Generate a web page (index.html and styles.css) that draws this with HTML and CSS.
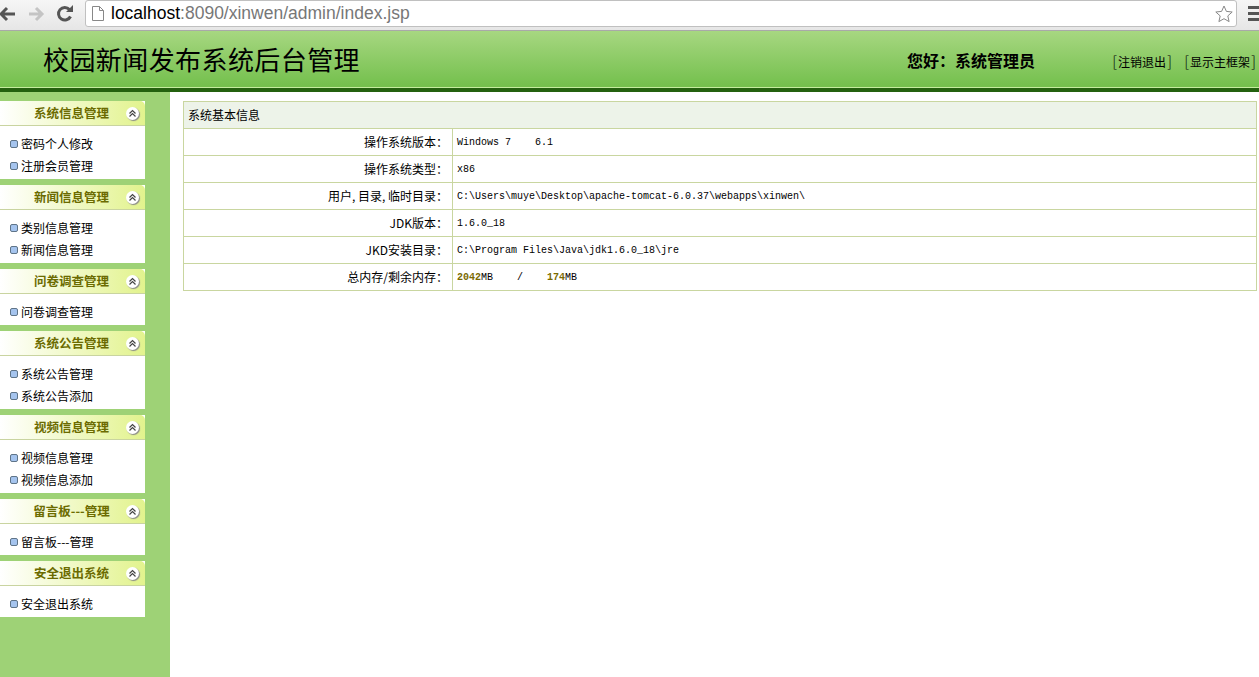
FILE: index.html
```html
<!DOCTYPE html>
<html lang="zh">
<head>
<meta charset="utf-8">
<title>校园新闻发布系统后台管理</title>
<link rel="stylesheet" href="styles.css">
</head>
<body>
<svg class="defs" width="0" height="0"><symbol id="up" viewBox="0 0 13 13"><path d="M3.500 6.500l3-3 3 3M3.500 9.500l3-3 3 3" fill="none" stroke="#444" stroke-width="1.200"/></symbol></svg>
<div class="chrome">
  <svg class="nav" width="20" height="20" viewBox="0 0 20 20"><path d="M18 10H6M10 4l-6 6 6 6" fill="none" stroke="#555" stroke-width="3"/></svg>
  <svg class="nav" width="20" height="20" viewBox="0 0 20 20"><path d="M3 10h12M10 4l6 6-6 6" fill="none" stroke="#c4c4c4" stroke-width="3"/></svg>
  <svg class="nav" width="20" height="20" viewBox="0 0 20 20"><path d="M15.500 12.500A6.300 6.300 0 1 1 14.500 5.500" fill="none" stroke="#555" stroke-width="3"/><path d="M11 8h7V1z" fill="#555"/></svg>
  <div class="omnibox">
    <svg class="page" width="12" height="15" viewBox="0 0 12 15"><path d="M.5.5h7l4 4v10H.5zM7.500.5v4h4" fill="#fff" stroke="#888"/></svg>
    <span class="url"><span class="host">localhost</span>:8090/xinwen/admin/index.jsp</span>
    <svg class="star" width="18" height="18" viewBox="0 0 18 18"><path d="M9 1l2.400 5.400 5.800.6-4.400 3.900 1.300 5.700L9 13.700l-5.100 2.900 1.300-5.700L.8 7l5.800-.6z" fill="#fff" stroke="#888"/></svg>
  </div>
  <div class="menu"><i></i><i></i><i></i></div>
</div>
<header class="top">
  <h1 class="title">校园新闻发布系统后台管理</h1>
  <div class="hello">您好：系统管理员</div>
  <div class="links"><a><span class="br">[</span>注销退出<span class="br">]</span></a><a><span class="br">[</span>显示主框架<span class="br">]</span></a></div>
</header>
<div class="main">
  <aside class="side">
    <section class="panel"><h2 class="head">系统信息管理<svg class="fold"><use href="#up"/></svg></h2><ul class="items"><li>密码个人修改</li><li>注册会员管理</li></ul></section>
    <section class="panel"><h2 class="head">新闻信息管理<svg class="fold"><use href="#up"/></svg></h2><ul class="items"><li>类别信息管理</li><li>新闻信息管理</li></ul></section>
    <section class="panel"><h2 class="head">问卷调查管理<svg class="fold"><use href="#up"/></svg></h2><ul class="items"><li>问卷调查管理</li></ul></section>
    <section class="panel"><h2 class="head">系统公告管理<svg class="fold"><use href="#up"/></svg></h2><ul class="items"><li>系统公告管理</li><li>系统公告添加</li></ul></section>
    <section class="panel"><h2 class="head">视频信息管理<svg class="fold"><use href="#up"/></svg></h2><ul class="items"><li>视频信息管理</li><li>视频信息添加</li></ul></section>
    <section class="panel"><h2 class="head">留言板---管理<svg class="fold"><use href="#up"/></svg></h2><ul class="items"><li>留言板---管理</li></ul></section>
    <section class="panel"><h2 class="head">安全退出系统<svg class="fold"><use href="#up"/></svg></h2><ul class="items"><li>安全退出系统</li></ul></section>
  </aside>
  <div class="content">
    <table class="info">
      <tr><th colspan="2" class="cap">系统基本信息</th></tr>
      <tr><td class="lab">操作系统版本：</td><td class="val">Windows 7&nbsp;&nbsp;&nbsp;&nbsp;6.1</td></tr>
      <tr><td class="lab">操作系统类型：</td><td class="val">x86</td></tr>
      <tr><td class="lab">用户, 目录, 临时目录：</td><td class="val">C:\Users\muye\Desktop\apache-tomcat-6.0.37\webapps\xinwen\</td></tr>
      <tr><td class="lab">JDK版本：</td><td class="val">1.6.0_18</td></tr>
      <tr><td class="lab">JKD安装目录：</td><td class="val">C:\Program Files\Java\jdk1.6.0_18\jre</td></tr>
      <tr><td class="lab">总内存/剩余内存：</td><td class="val"><b class="num">2042</b>MB&nbsp;&nbsp;&nbsp;&nbsp;/&nbsp;&nbsp;&nbsp;&nbsp;<b class="num">174</b>MB</td></tr>
    </table>
  </div>
</div>
</body>
</html>
```
FILE: styles.css
```css
* { box-sizing: border-box; }
html, body { margin: 0; height: 100%; overflow: hidden; }
body { display: flex; flex-direction: column; background: #fff; font: 12px "Noto Sans CJK SC", "Liberation Sans", sans-serif; color: #000; }
.defs { display: block; flex: none; }
.chrome { height: 31px; flex: none; display: flex; align-items: center; background: linear-gradient(#f6f6f6, #e6e6e6); border-bottom: 1px solid #a9a9a9; padding-bottom: 3px; margin-left: -3px; }
.nav { flex: none; margin-right: 9px; width: 20px; }
.omnibox { flex: 1; height: 27px; margin-left: 1px; display: flex; align-items: center; background: #fff; border: 1px solid #c0c0c0; border-radius: 3px; padding: 0 3px 0 6px; }
.page { flex: none; margin-right: 7px; }
.url { flex: 1; font: 17.500px "Liberation Sans", sans-serif; color: #777; }
.host { color: #000; }
.star { flex: none; }
.menu { width: 22px; flex: none; padding-left: 11px; display: flex; flex-direction: column; gap: 3px; }
.menu i { height: 3px; background: #555; }
.top { height: 61px; flex: none; display: flex; align-items: center; padding: 0 0 1px 43px; background: linear-gradient(#a7d781, #74c04d 55px, #74c04d); border-bottom: 4px solid #24610f; box-shadow: inset 0 -1px 0 #c4ec9e; white-space: nowrap; }
.title { margin: 0; width: 864px; flex: none; font-size: 26px; font-weight: 400; letter-spacing: .42px; line-height: 30px; }
.hello { width: 204px; flex: none; padding-top: 2px; font-size: 16px; font-weight: 700; }
.links { display: flex; gap: 10px; font-size: 12px; padding-top: 5px; }
.br { display: inline-block; width: 7px; font-size: 15px; line-height: 16px; font-weight: 300; text-align: center; }
.main { flex: 1; display: flex; min-height: 0; }
.side { width: 170px; flex: none; padding-top: 9px; background: #9ed276; display: flex; flex-direction: column; gap: 6px; }
.panel { width: 145px; background: #fff; }
.head { position: relative; margin: 0; height: 25px; padding: 1px 2px 0 0; display: flex; align-items: center; justify-content: center; font-size: 12.500px; line-height: 1; font-weight: 700; color: #6b6b00; background: linear-gradient(90deg, #fff, #e2f38d); border-bottom: 1px solid #c9d4a0; border-top-right-radius: 5px; }
.fold { position: absolute; left: 126px; top: 6px; width: 13px; height: 13px; border-radius: 50%; background: #fff; box-shadow: 1px 1px 1px #888; }
.items { list-style: none; margin: 0; padding: 7px 0 2px; }
.items li { height: 22px; line-height: 22px; padding-left: 21px; font-size: 12px; position: relative; }
.items li::before { content: ""; position: absolute; left: 10px; top: 7px; width: 6px; height: 6px; border-radius: 2px; background: #a5c4ee; border: 1px solid #5f7488; }
.content { flex: 1; padding: 9px 2px 0 13px; }
.info { width: 100%; border-collapse: collapse; border: 1px solid #c9d6a0; }
.info td, .info th { border: 1px solid #c9d6a0; height: 27px; padding: 0; }
.cap { background: #edf3e9; font-weight: 400; text-align: left; padding: 0 0 2px 4px !important; }
.lab { width: 269px; text-align: right; padding: 0 4px 2px 0 !important; }
.val { padding-left: 4px !important; font: 10px "Liberation Mono", monospace; }
.num { color: #7a6a00; }
```
